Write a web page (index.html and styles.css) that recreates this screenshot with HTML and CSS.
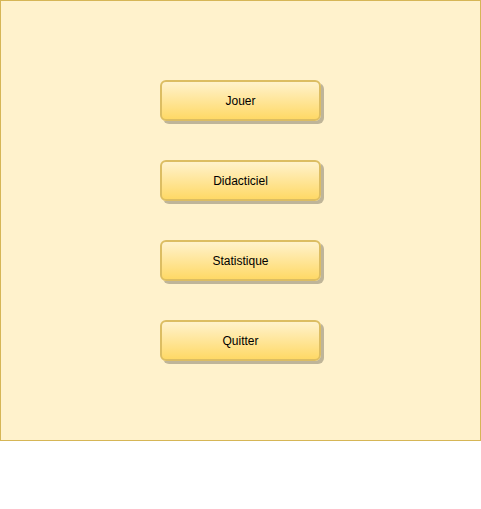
FILE: index.html
```html
<!DOCTYPE html>
<html>
<head>
<meta charset="utf-8">
<link rel="stylesheet" href="styles.css">
</head>
<body>
<div class="panel">
  <div class="menu">
    <div class="btn">Jouer</div>
    <div class="btn">Didacticiel</div>
    <div class="btn">Statistique</div>
    <div class="btn">Quitter</div>
  </div>
</div>
</body>
</html>
```
FILE: styles.css
```css
html, body {
  margin: 0;
  padding: 0;
  background: #ffffff;
}
.panel {
  box-sizing: border-box;
  width: 481px;
  height: 441px;
  border: 1px solid #d6b656;
  background: #fff2cc;
  padding-top: 79px;
}
.menu {
  display: flex;
  flex-direction: column;
  align-items: center;
  gap: 39px;
}
.btn {
  box-sizing: border-box;
  width: 161px;
  height: 41px;
  border: 2px solid #dcbd62;
  border-radius: 6px;
  background: linear-gradient(to bottom, #fff2cc, #ffd966);
  box-shadow: 3px 3px 0 rgba(0, 0, 0, 0.25);
  display: flex;
  align-items: center;
  justify-content: center;
  font-family: "Liberation Sans", Arial, sans-serif;
  font-size: 12px;
  color: #000000;
}
```
